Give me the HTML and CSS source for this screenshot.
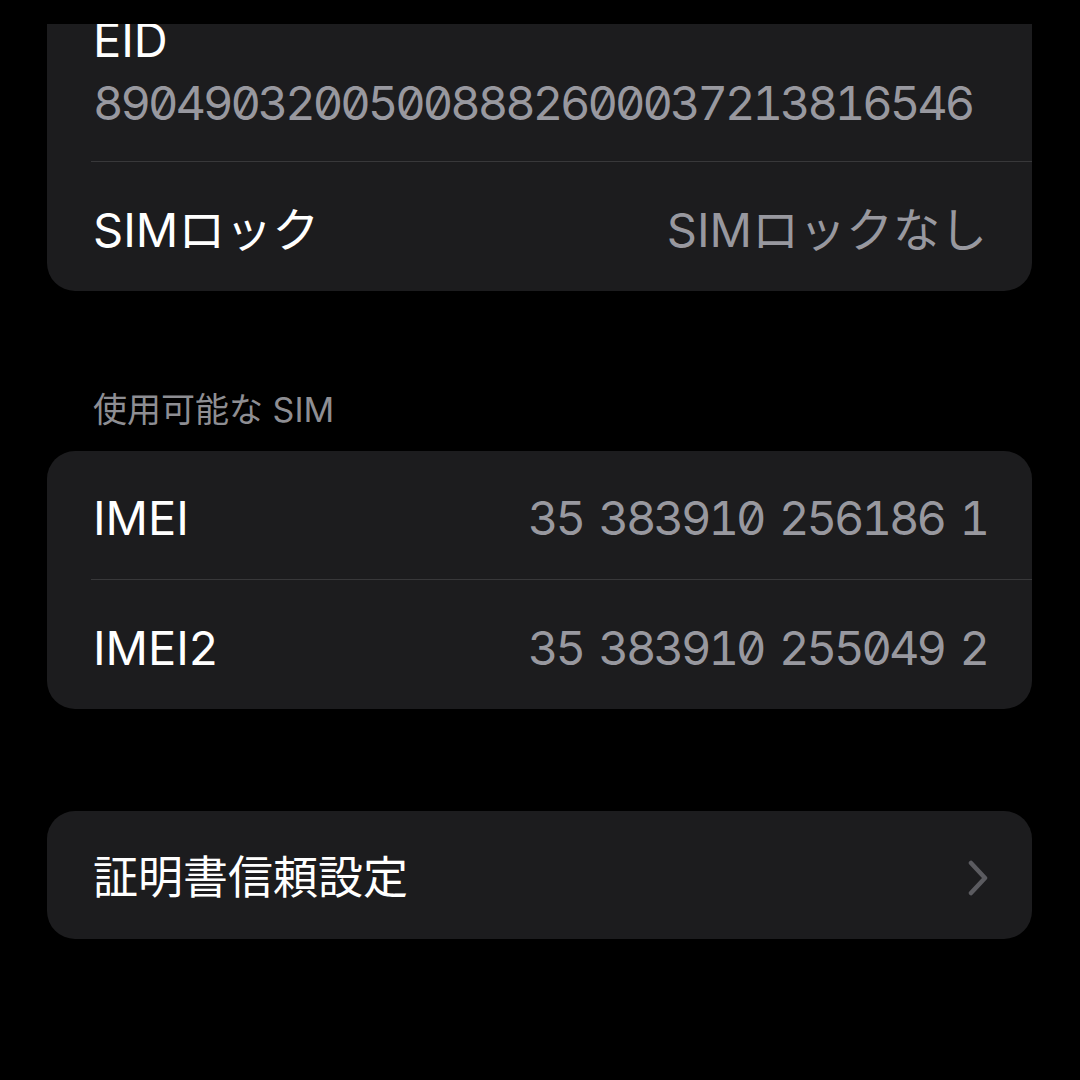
FILE: index.html
```html
<!DOCTYPE html>
<html lang="ja">
<head>
  <meta charset="UTF-8">
  <title>情報</title>
  <link rel="stylesheet" href="styles.css">
</head>
<body>
  <div class="topbar"></div>
  <main class="scroll">
    <section class="group group-first">
      <div class="row row-stack">
        <span class="label">EID</span>
        <span class="value num eid">89049032005008882600037213816546</span>
      </div>
      <div class="row">
        <span class="label">SIMロック</span>
        <span class="value">SIMロックなし</span>
      </div>
    </section>

    <h2 class="group-title">使用可能な SIM</h2>
    <section class="group">
      <div class="row">
        <span class="label">IMEI</span>
        <span class="value num">35 383910 256186 1</span>
      </div>
      <div class="row">
        <span class="label">IMEI2</span>
        <span class="value num">35 383910 255049 2</span>
      </div>
    </section>

    <section class="group group-link">
      <div class="row">
        <span class="label label-cjk">証明書信頼設定</span>
        <svg class="chevron" width="22" height="36" viewBox="0 0 22 36">
          <path d="M4 3 L18 18 L4 33" fill="none" stroke="#5b5b60" stroke-width="4.5" stroke-linecap="round" stroke-linejoin="round"/>
        </svg>
      </div>
    </section>
  </main>
</body>
</html>
```

FILE: styles.css
```css
* {
  box-sizing: border-box;
}
html, body {
  margin: 0;
  background: #000;
}
body {
  font-family: Inter, "Noto Sans CJK JP", sans-serif;
  color: #fff;
}
.topbar {
  height: 24px;
  background: #000;
}
/* the list is scrolled a little, so the first card starts above the bar */
.scroll {
  height: 1056px;
  overflow: hidden;
  padding: 0 48px 0 47px;
}
.group {
  background: #1c1c1e;
  border-radius: 28px;
}
.group-first {
  margin-top: -40px;
  border-radius: 0 0 28px 28px;
}
.group-link {
  margin-top: 102px;
}
.group-title {
  margin: 99px 0 21px 46px;
  font-size: 34px;
  line-height: 40px;
  font-weight: 400;
  color: #8e8e93;
}
.row {
  display: flex;
  justify-content: space-between;
  align-items: center;
  height: 129px;
  margin-left: 44px;
  padding: 6px 45px 0 2px;
  border-bottom: 1px solid #38383a;
}
.row:last-child {
  border-bottom: 0;
}
.group-link .row {
  height: 128px;
}
.row-stack {
  flex-direction: column;
  align-items: flex-start;
  height: auto;
  padding-top: 26px;
  padding-bottom: 28px;
}
.label {
  font-size: 47px;
  line-height: 60px;
}
.label-cjk {
  font-size: 45px;
}
.value {
  font-size: 47px;
  line-height: 60px;
  color: #98989f;
}
.num {
  font-variant-numeric: tabular-nums slashed-zero;
  letter-spacing: -3px;
  word-spacing: 6px;
}
.eid {
  margin-top: 3px;
}
.chevron {
  display: block;
  margin-right: -2px;
}
```
